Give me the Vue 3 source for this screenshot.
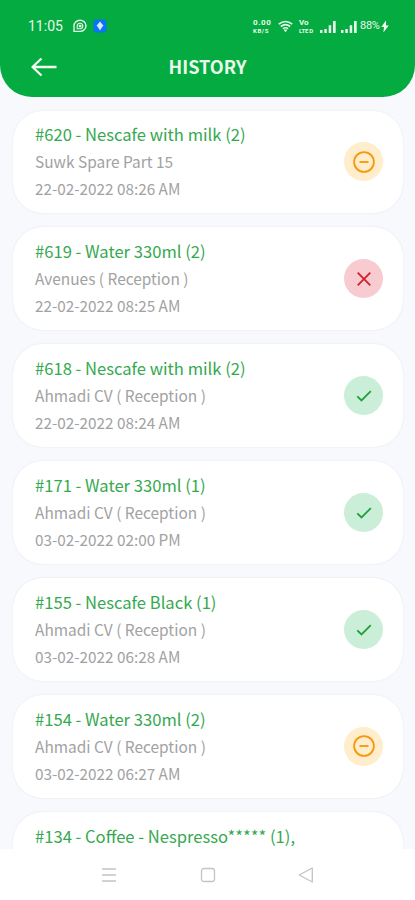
<script setup>
const orders = [
  { id: 620, item: 'Nescafe with milk (2)', place: 'Suwk Spare Part 15', date: '22-02-2022 08:26 AM', status: 'pending' },
  { id: 619, item: 'Water 330ml (2)', place: 'Avenues ( Reception )', date: '22-02-2022 08:25 AM', status: 'rejected' },
  { id: 618, item: 'Nescafe with milk (2)', place: 'Ahmadi CV ( Reception )', date: '22-02-2022 08:24 AM', status: 'done' },
  { id: 171, item: 'Water 330ml (1)', place: 'Ahmadi CV ( Reception )', date: '03-02-2022 02:00 PM', status: 'done' },
  { id: 155, item: 'Nescafe Black (1)', place: 'Ahmadi CV ( Reception )', date: '03-02-2022 06:28 AM', status: 'done' },
  { id: 154, item: 'Water 330ml (2)', place: 'Ahmadi CV ( Reception )', date: '03-02-2022 06:27 AM', status: 'pending' },
  { id: 134, item: 'Coffee - Nespresso***** (1),', place: '', date: '', status: '' }
]
</script>

<template>
  <div class="screen">
    <header class="header">
      <div class="status">
        <span class="clock">11:05</span>
        <svg class="chat" viewBox="0 0 14 14" width="14" height="14" fill="none" stroke="#e4f7e6">
          <path d="M1 12.4V7A6 5.6 0 1 1 7 12.4Z" stroke-width="1.4" />
          <path d="M4.2 9.8V6.9A2.8 2.8 0 1 1 7 9.8Z" stroke-width="1.1" />
          <path d="M5.8 5.8h2.6v2.5H5.8z" fill="#e4f7e6" stroke="none" />
        </svg>
        <svg class="app" viewBox="0 0 14 14" width="14" height="14">
          <rect x=".5" y=".5" width="13" height="13" rx="3" fill="#0b74f5" />
          <path d="M7 2.4 8.8 4.8 10.4 6.6 8.8 8.4 7 11.5 5.2 8.4 3.6 6.6 5.2 4.8Z" fill="#d5eaff" />
        </svg>
        <span class="spacer"></span>
        <span class="stack speed"><b>0.00</b><b class="unit">KB/S</b></span>
        <svg class="wifi" viewBox="0 0 15 13" width="15" height="13" fill="none" stroke="#e4f7e6" stroke-width="1.6">
          <path d="M.7 4.2Q7.5-1.2 14.3 4.2M2.8 6.5Q7.5 2.8 12.2 6.5M4.9 8.7Q7.5 6.8 10.1 8.7" />
          <path d="m5.5 9.6 2 2.6 2-2.6Z" fill="#e4f7e6" stroke="none" />
        </svg>
        <span class="stack volte"><b>Vo</b><b class="unit">LTE D</b></span>
        <svg v-for="n in 2" :key="n" class="signal" viewBox="0 0 16 13" width="16" height="13" fill="#e4f7e6">
          <path d="M0 10h2.5v3H0zM4.3 9h2.5v4H4.3zM8.7 5.2h2.5V13H8.7zM13 1h2.7v12H13z" />
        </svg>
        <span class="battery">88%</span>
        <svg class="bolt" viewBox="0 0 8 13" width="8" height="13"><path d="M5 .5.3 7H3L2.4 12.5 7.8 5.6H5Z" fill="#f2fff2" /></svg>
      </div>
      <div class="bar">
        <svg class="back" viewBox="0 0 26 20" width="26" height="20" fill="none" stroke="#f1fff1" stroke-width="2.3" stroke-linejoin="round">
          <path d="M25.5 10H1.5M10.5 1.5 1.5 10 10.5 18.5" />
        </svg>
        <h1>HISTORY</h1>
        <span></span>
      </div>
    </header>

    <main class="list">
      <article v-for="o in orders" :key="o.id" class="card">
        <div class="info">
          <h2>#{{ o.id }} - {{ o.item }}</h2>
          <p class="place">{{ o.place }}</p>
          <p class="date">{{ o.date }}</p>
        </div>
        <div v-if="o.status" class="badge" :class="o.status">
          <svg viewBox="0 0 24 24" width="24" height="24" fill="none" stroke="currentColor">
            <g v-if="o.status === 'pending'" stroke-width="1.8"><circle cx="12" cy="12" r="9.9" /><path d="M7.5 12h9" /></g>
            <path v-else-if="o.status === 'rejected'" d="m5.7 5.7 12.6 12.6M18.3 5.7 5.7 18.3" stroke-width="1.8" />
            <path v-else d="m5.3 12.3 4.2 4.2 9.3-9.3" stroke-width="1.8" />
          </svg>
        </div>
      </article>
    </main>

    <nav class="nav">
      <svg viewBox="0 0 16 16" width="16" height="16"><path d="M1 2h14M1 8h14M1 14h14" /></svg>
      <svg viewBox="0 0 16 16" width="16" height="16"><rect x="1.5" y="1.5" width="13" height="13" rx="2.5" /></svg>
      <svg viewBox="0 0 16 16" width="16" height="16"><path d="M14.3 1v14L1.2 8Z" stroke-linejoin="round" /></svg>
    </nav>
  </div>
</template>

<style>
body { margin: 0; overflow: hidden; }
</style>

<style scoped>
.screen {
  display: flex;
  flex-direction: column;
  width: 415px;
  height: 900px;
  overflow: hidden;
  background: #f7f9fd;
  font-family: "Noto Sans CJK SC", "Noto Sans", sans-serif;
}
.header {
  flex: none;
  box-sizing: border-box;
  height: 97px;
  padding-top: 16px;
  border-radius: 0 0 32px 32px;
  background: #03ab41;
  color: #e9f9ea;
}
.status {
  display: flex;
  align-items: center;
  height: 20px;
  padding: 0 26px 0 28px;
}
.clock { width: 35px; font: 400 14px/20px Roboto, sans-serif; white-space: nowrap; }
.chat { margin-left: 10px; }
.app { margin-left: 6px; }
.spacer { flex: 1; }
.stack { display: flex; flex-direction: column; font-family: Roboto, sans-serif; font-size: 8px; line-height: 8px; white-space: nowrap; }
.stack .unit { font-size: 6px; line-height: 7px; }
.speed { width: 20px; letter-spacing: 0.6px; }
.wifi { margin-left: 5px; }
.volte { width: 16px; margin-left: 6px; }
.volte .unit { letter-spacing: -0.2px; }
.signal { margin-left: 5px; }
.battery { width: 21px; margin-left: 3px; font: 400 11px/20px Roboto, sans-serif; letter-spacing: -0.3px; }
.bar {
  display: grid;
  grid-template-columns: 31px 1fr 31px;
  align-items: center;
  height: 30px;
  margin-top: 16px;
  padding: 0 31px;
}
.bar h1 { height: 30px; margin: 0; text-align: center; font-size: 18.1px; line-height: 28px; font-weight: 700; }
.list {
  display: flex;
  flex: 1;
  flex-direction: column;
  gap: 14px;
  min-height: 0;
  padding: 13.5px 12px 0 13px;
  overflow: hidden;
}
.card {
  display: flex;
  flex: none;
  align-items: center;
  justify-content: space-between;
  box-sizing: border-box;
  height: 102.9px;
  padding: 0 20px 0 22px;
  border-radius: 30px;
  background: #fff;
  box-shadow: 0 0 2px rgba(60, 80, 110, 0.13);
}
.info { height: 81px; }
h2, p { height: 27px; margin: 0; font-weight: 400; line-height: 27px; white-space: nowrap; }
h2 { color: #35a94f; font-size: 16.6px; }
p { color: #a2a2a2; font-size: 15.45px; }
.date { font-size: 15.3px; }
.badge {
  display: flex;
  align-items: center;
  justify-content: center;
  width: 39px;
  height: 39px;
  border-radius: 50%;
}
.pending { background: #ffedcb; color: #f5980f; }
.rejected { background: #f8cbd1; color: #d31f28; }
.done { background: #cbeed8; color: #20a13c; }
.nav {
  display: flex;
  flex: none;
  align-items: center;
  justify-content: space-between;
  box-sizing: border-box;
  height: 51px;
  padding: 0 101px;
  background: #fff;
}
.nav svg { fill: none; stroke: #c4c4c4; stroke-width: 1.3; }
</style>
